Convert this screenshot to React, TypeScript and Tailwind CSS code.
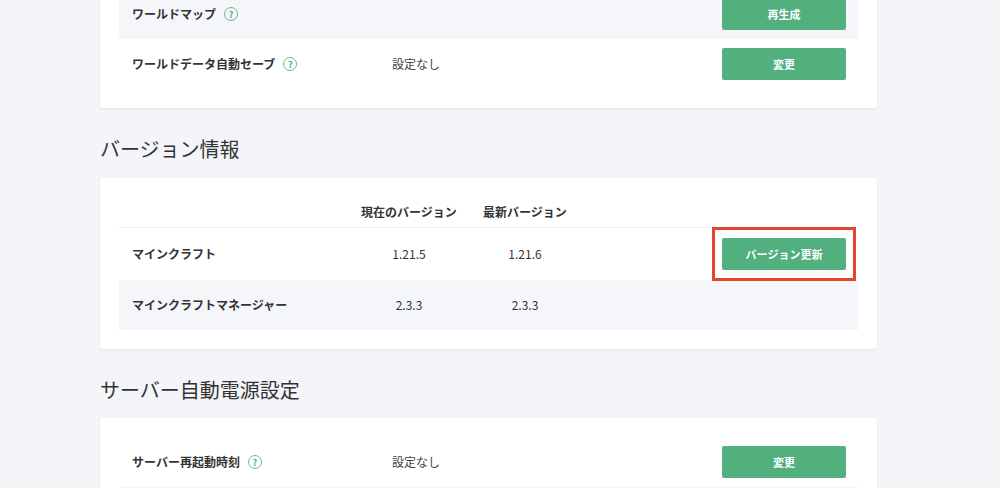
const font = { fontFamily: '"Noto Sans CJK JP", "Noto Sans", sans-serif' };

function Help() {
  return (
    <span className="ml-2 inline-flex h-[14px] w-[14px] items-center justify-center rounded-full border-[1.5px] border-[#5cbf8a] text-[9px] font-bold leading-none text-[#4caf7d]">
      ?
    </span>
  );
}

function Btn({ label }: { label: string }) {
  return (
    <button className="ml-auto mr-3 h-8 w-[124px] rounded-[2px] bg-[#52b07f] text-[11px] font-bold text-white">
      {label}
    </button>
  );
}

function SettingRow({ label, value, btn, gray }: { label: string; value?: string; btn: string; gray?: boolean }) {
  return (
    <div className={`flex h-[50px] items-center ${gray ? "bg-[#f5f6fa]" : ""}`}>
      <div className="flex w-[273px] items-center pl-[13px] text-[12px] font-bold text-[#333]">
        {label}
        <Help />
      </div>
      <div className="text-[12px] text-[#444]">{value}</div>
      <Btn label={btn} />
    </div>
  );
}

function Heading({ children }: { children: string }) {
  return <h2 className="h-[30px] text-[20px] leading-[30px] text-[#333]">{children}</h2>;
}

export default function App() {
  return (
    <div className="h-[488px] overflow-hidden bg-[#f4f5f9]" style={font}>
      <div className="ml-[100px] w-[777px]">
        <div className="mt-[-30px] rounded-[3px] bg-white p-[19px] shadow-[0_1px_3px_rgba(0,0,0,0.08)]">
          <SettingRow label="ワールドマップ" btn="再生成" gray />
          <SettingRow label="ワールドデータ自動セーブ" value="設定なし" btn="変更" />
        </div>

        <div className="mb-[14px] mt-[26px]">
          <Heading>バージョン情報</Heading>
        </div>
        <div className="rounded-[3px] bg-white p-[19px] shadow-[0_1px_3px_rgba(0,0,0,0.08)]">
          <div className="flex h-[31px] items-center border-b border-[#eef0f3] text-[12px] font-bold text-[#333]">
            <div className="w-[232px]" />
            <div className="w-[116px] text-center">現在のバージョン</div>
            <div className="w-[116px] text-center">最新バージョン</div>
          </div>
          <div className="flex h-[52px] items-center text-[12px] text-[#333]">
            <div className="w-[232px] pl-[13px] font-bold">マインクラフト</div>
            <div className="w-[116px] text-center">1.21.5</div>
            <div className="w-[116px] text-center">1.21.6</div>
            <div className="relative ml-auto mr-3">
              <button className="h-8 w-[124px] rounded-[2px] bg-[#52b07f] text-[11px] font-bold text-white">
                バージョン更新
              </button>
              <div className="pointer-events-none absolute -inset-x-[10px] -inset-y-[11px] border-[3px] border-[#e8432d]" />
            </div>
          </div>
          <div className="flex h-[50px] items-center bg-[#f5f6fa] text-[12px] text-[#333]">
            <div className="w-[232px] pl-[13px] font-bold">マインクラフトマネージャー</div>
            <div className="w-[116px] text-center">2.3.3</div>
            <div className="w-[116px] text-center">2.3.3</div>
          </div>
        </div>

        <div className="mb-[13px] mt-[26px]">
          <Heading>サーバー自動電源設定</Heading>
        </div>
        <div className="rounded-[3px] bg-white p-[19px] shadow-[0_1px_3px_rgba(0,0,0,0.08)]">
          <SettingRow label="サーバー再起動時刻" value="設定なし" btn="変更" />
          <div className="h-[50px] bg-[#f5f6fa]" />
        </div>
      </div>
    </div>
  );
}
